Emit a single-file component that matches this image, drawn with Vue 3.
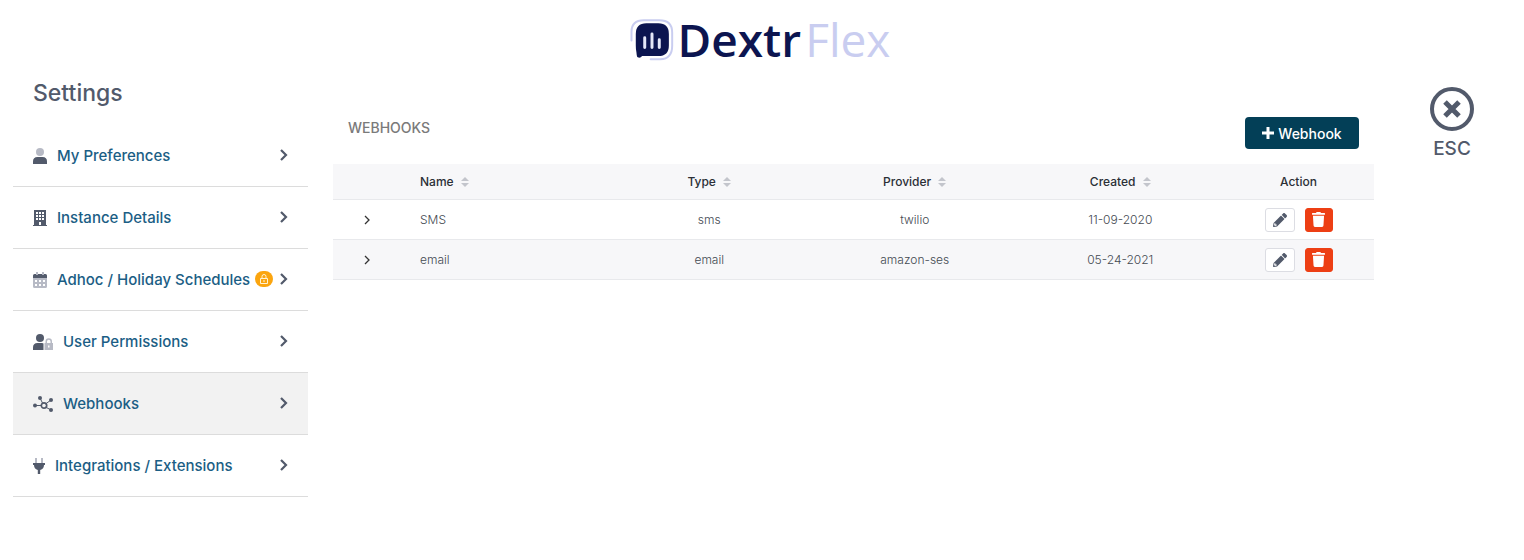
<script setup>
import { ref } from 'vue'

const items = [
  { icon: 'user', label: 'My Preferences', width: 14 },
  { icon: 'building', label: 'Instance Details', width: 14 },
  { icon: 'calendar', label: 'Adhoc / Holiday Schedules', width: 14, locked: true },
  { icon: 'userlock', label: 'User Permissions', width: 20 },
  { icon: 'hub', label: 'Webhooks', width: 20 },
  { icon: 'plug', label: 'Integrations / Extensions', width: 12 }
]
const active = ref('Webhooks')

const columns = ['Name', 'Type', 'Provider', 'Created']
const hooks = [
  { name: 'SMS', type: 'sms', provider: 'twilio', created: '11-09-2020' },
  { name: 'email', type: 'email', provider: 'amazon-ses', created: '05-24-2021' }
]
</script>

<template>
  <div class="page">
    <header class="brand">
      <svg class="mark" viewBox="0 0 132 130" aria-hidden="true">
        <path d="M4 68V42Q4 7 41 7H88Q127 7 127 44V84Q127 124 91 125H62" fill="none" stroke="#c9cdf0" stroke-width="6" stroke-linecap="round" />
        <path d="M49 16H85Q117 16 117 48V83Q117 115 85 115H36Q31 122 23 119Q20 117 19 104Q17 96 17 83V48Q17 16 49 16Z" fill="#0c1550" />
        <path d="M44 60V89M66 48V89M88 66V89" fill="none" stroke="#e4e7f8" stroke-width="9" stroke-linecap="round" />
      </svg>
      <span class="dextr">Dextr</span><span class="flex">Flex</span>
    </header>

    <div class="layout">
      <aside class="side">
        <h1>Settings</h1>
        <nav>
          <a
            v-for="item in items"
            :key="item.label"
            href="#"
            :class="{ active: active === item.label }"
            @click.prevent="active = item.label"
          >
            <svg class="icon" :viewBox="`0 0 ${item.width} 16`" :width="item.width" height="16" aria-hidden="true">
              <template v-if="item.icon === 'user'">
                <circle cx="7" cy="4" r="4" fill="#b7bac5" />
                <path d="M0 16V13.500Q0 9 4.500 9H9.500Q14 9 14 13.500V16Z" />
              </template>
              <path
                v-else-if="item.icon === 'building'"
                fill-rule="evenodd"
                d="M1 0H13V15H14V16H0V15H1ZM3 2V4H5V2ZM6 2V4H8V2ZM9 2V4H11V2ZM3 5V7H5V5ZM6 5V7H8V5ZM9 5V7H11V5ZM3 8V10H5V8ZM6 8V10H8V8ZM9 8V10H11V8ZM6 12V15H8V12Z"
              />
              <template v-else-if="item.icon === 'calendar'">
                <path d="M3 0H5V3H3ZM9 0H11V3H9Z" fill="#b7bac5" />
                <path d="M0 6V3.500Q0 2 1.500 2H3V3H5V2H9V3H11V2H12.500Q14 2 14 3.500V6Z" />
                <path d="M0 6H14V14.500Q14 16 12.500 16H1.500Q0 16 0 14.500ZM2 8V10H4V8ZM6 8V10H8V8ZM10 8V10H12V8ZM2 12V14H4V12ZM6 12V14H8V12ZM10 12V14H12V12Z" fill="#b7bac5" fill-rule="evenodd" />
              </template>
              <template v-else-if="item.icon === 'userlock'">
                <circle cx="7" cy="4" r="4" />
                <path d="M0 16V13.500Q0 9 4.500 9H9Q10 9 10.500 9.500V16Z" />
                <path d="M11.500 9H12.500V7.500A3.250 3.250 0 0 1 19 7.500V9H20V16H11.500ZM14 9H17.500V7.500A1.750 1.750 0 0 0 14 7.500ZM15 11.500V13.500H16.500V11.500Z" fill="#b7bac5" fill-rule="evenodd" />
              </template>
              <template v-else-if="item.icon === 'hub'">
                <path d="M2 9.500H8M7 2L10 8M18 4L12.500 8M18 14L12.500 11" fill="none" stroke="#525a6b" />
                <circle cx="2" cy="9.500" r="2" /><circle cx="7" cy="2" r="2" />
                <circle cx="18" cy="4" r="2" /><circle cx="18" cy="14" r="2" />
                <circle cx="11" cy="9.500" r="2.700" fill="none" stroke="#525a6b" stroke-width="1.700" />
              </template>
              <template v-else>
                <path d="M2 0H4V5H2ZM8 0H10V5H8Z" fill="#b7bac5" />
                <path d="M0 5H12V7H11Q11 11 7.200 12V16H4.800V12Q1 11 1 7H0Z" />
              </template>
            </svg>
            <span>{{ item.label }}</span>
            <span v-if="item.locked" class="lock">
              <svg viewBox="0 0 12 12" width="12" height="12" aria-hidden="true">
                <path d="M2.500 5.500H9.500V10.500H2.500ZM4 5.500V3.500A2 2 0 0 1 8 3.500V5.500M5 8H7" fill="none" stroke="#fff3d6" />
              </svg>
            </span>
            <svg class="chev" viewBox="0 0 10 14" width="10" height="14" aria-hidden="true">
              <path d="M2 1L7 6L2 11" fill="none" stroke="#525a6b" stroke-width="2.200" />
            </svg>
          </a>
        </nav>
      </aside>

      <main>
        <div class="bar">
          <h2>WEBHOOKS</h2>
          <button class="add" type="button">
            <svg viewBox="0 0 12 12" width="12" height="12" aria-hidden="true">
              <path d="M6 0V12M0 6H12" stroke="#fff" stroke-width="3" />
            </svg>
            Webhook
          </button>
        </div>

        <table>
          <thead>
            <tr>
              <th class="expand"></th>
              <th v-for="col in columns" :key="col">
                {{ col }}
                <svg class="sort" viewBox="0 0 8 10" width="8" height="10" aria-hidden="true">
                  <path d="M0 4L4 0L8 4ZM0 6L4 10L8 6Z" />
                </svg>
              </th>
              <th class="action">Action</th>
            </tr>
          </thead>
          <tbody>
            <tr v-for="hook in hooks" :key="hook.name">
              <td>
                <button class="open" type="button" :aria-label="`Expand ${hook.name}`">
                  <svg viewBox="0 0 8 10" width="8" height="10" aria-hidden="true">
                    <path d="M2 1L6 5L2 9" fill="none" stroke="#333" stroke-width="1.300" />
                  </svg>
                </button>
              </td>
              <td>{{ hook.name }}</td>
              <td>{{ hook.type }}</td>
              <td>{{ hook.provider }}</td>
              <td>{{ hook.created }}</td>
              <td>
                <div class="acts">
                  <button class="edit" type="button" :aria-label="`Edit ${hook.name}`">
                    <svg viewBox="0 0 512 512" width="14" height="14" aria-hidden="true">
                      <path fill-rule="evenodd" d="M497.900 142.100l-46.100 46.100c-4.700 4.700-12.300 4.700-17 0l-111-111c-4.700-4.700-4.700-12.300 0-17l46.100-46.100c18.700-18.700 49.100-18.700 67.900 0l60.100 60.100c18.800 18.700 18.800 49.100 0 67.900zM284.200 99.800L21.600 362.400.4 483.900c-2.900 16.400 11.400 30.600 27.800 27.800l121.500-21.300 262.600-262.600c4.700-4.700 4.700-12.300 0-17l-111-111c-4.800-4.700-12.400-4.700-17.100 0zM88 424h48v36.300l-64.500 11.300-31.100-31.100L51.700 376H88z" />
                    </svg>
                  </button>
                  <button class="del" type="button" :aria-label="`Delete ${hook.name}`">
                    <svg viewBox="0 0 448 512" width="13" height="15" aria-hidden="true">
                      <path d="M432 32H312l-9.400-18.700A24 24 0 0 0 281.100 0H166.800a23.700 23.700 0 0 0-21.400 13.300L136 32H16A16 16 0 0 0 0 48v32a16 16 0 0 0 16 16h416a16 16 0 0 0 16-16V48a16 16 0 0 0-16-16zM53.200 467a48 48 0 0 0 47.900 45h245.800a48 48 0 0 0 47.900-45L416 128H32z" />
                    </svg>
                  </button>
                </div>
              </td>
            </tr>
          </tbody>
        </table>
      </main>

      <div class="exit">
        <button type="button">
          <svg viewBox="0 0 44 44" width="44" height="44" aria-hidden="true">
            <circle cx="22" cy="22" r="20" fill="none" stroke="#525a6b" stroke-width="4" />
            <path d="M15 15L29 29M29 15L15 29" stroke="#525a6b" stroke-width="5" />
          </svg>
          ESC
        </button>
      </div>
    </div>
  </div>
</template>

<style>
body {
  margin: 0;
  background: #fff;
}
</style>

<style scoped>
.page {
  font-family: Inter, "Open Sans", sans-serif;
  color: #525a6b;
}
button {
  font-family: inherit;
  cursor: pointer;
}
.brand {
  display: flex;
  justify-content: center;
  height: 62px;
  padding: 18px 4px 0 0;
}
.mark {
  width: 44px;
  height: 43px;
  margin-right: 4px;
}
.dextr,
.flex {
  font-family: "Open Sans", sans-serif;
  font-size: 46px;
  line-height: 42px;
  font-weight: 600;
  color: #0c1550;
}
.flex {
  font-weight: 400;
  color: #c9cdf0;
  margin-left: 4px;
}
.layout {
  display: flex;
}
.side {
  width: 295px;
  flex: none;
  margin: 0 25px 0 13px;
}
h1 {
  margin: 0;
  height: 45px;
  padding-left: 20px;
  font-size: 23px;
  line-height: 26px;
  font-weight: 500;
}
nav a {
  position: relative;
  display: flex;
  align-items: center;
  height: 61px;
  padding: 0 19px 0 20px;
  border-bottom: 1px solid #dcdcdc;
  color: #1b5e85;
  font-size: 15px;
  font-weight: 500;
  text-decoration: none;
  white-space: nowrap;
}
nav a.active {
  background: #f2f2f2;
}
.icon {
  flex: none;
  margin-right: 10px;
  fill: #525a6b;
}
.lock {
  position: absolute;
  right: 35px;
  top: 22px;
  display: flex;
  align-items: center;
  justify-content: center;
  width: 18px;
  height: 16px;
  border-radius: 8px;
  background: #fba50f;
}
.chev {
  margin-left: auto;
}
main {
  flex: 1;
  min-width: 0;
}
.bar {
  display: flex;
  justify-content: space-between;
  height: 47px;
  padding: 37px 15px 0;
}
h2 {
  margin: 0;
  font-size: 14px;
  line-height: 22px;
  font-weight: 500;
  color: #7a7a7a;
}
.add {
  display: flex;
  align-items: center;
  justify-content: center;
  gap: 4px;
  width: 114px;
  height: 32px;
  padding: 0;
  border: 0;
  border-radius: 4px;
  background: #033f57;
  color: #fff;
  font-size: 14px;
  font-weight: 500;
}
table {
  width: 100%;
  table-layout: fixed;
  border-collapse: separate;
  border-spacing: 0;
  font-size: 12px;
  text-align: center;
}
th,
td {
  box-sizing: border-box;
  height: 40px;
  padding: 0 10px;
  border-bottom: 1px solid #e8e9ec;
  font-weight: 300;
  color: #444a52;
}
th {
  height: 36px;
  background: #f7f7f9;
  font-weight: 500;
  color: #2b2f36;
}
th:nth-child(2),
td:nth-child(2) {
  text-align: left;
  padding-left: 19px;
}
tbody tr:nth-child(even) {
  background: #f7f7f9;
}
.expand {
  width: 68px;
}
.action {
  width: 151px;
}
.sort {
  margin-left: 4px;
  vertical-align: -1px;
  fill: #c3c5cc;
}
.open {
  border: 0;
  background: none;
  padding: 4px;
}
.open svg {
  display: block;
  margin: auto;
}
.acts {
  display: flex;
  justify-content: center;
  gap: 10px;
}
.edit,
.del {
  display: flex;
  align-items: center;
  justify-content: center;
  box-sizing: border-box;
  width: 30px;
  height: 24px;
  padding: 0;
  border: 1px solid #dcdde3;
  border-radius: 3px;
  background: #fff;
  fill: #525a6b;
}
.del {
  width: 28px;
  border-color: #ed3f14;
  background: #ed3f14;
  fill: #fff;
}
.exit {
  width: 144px;
  flex: none;
  padding: 7px 0 0 6px;
}
.exit button {
  display: flex;
  flex-direction: column;
  align-items: center;
  gap: 6px;
  margin: 0 auto;
  padding: 0;
  border: 0;
  background: none;
  color: #525a6b;
  font-size: 19px;
  line-height: 24px;
  font-weight: 500;
}
</style>
